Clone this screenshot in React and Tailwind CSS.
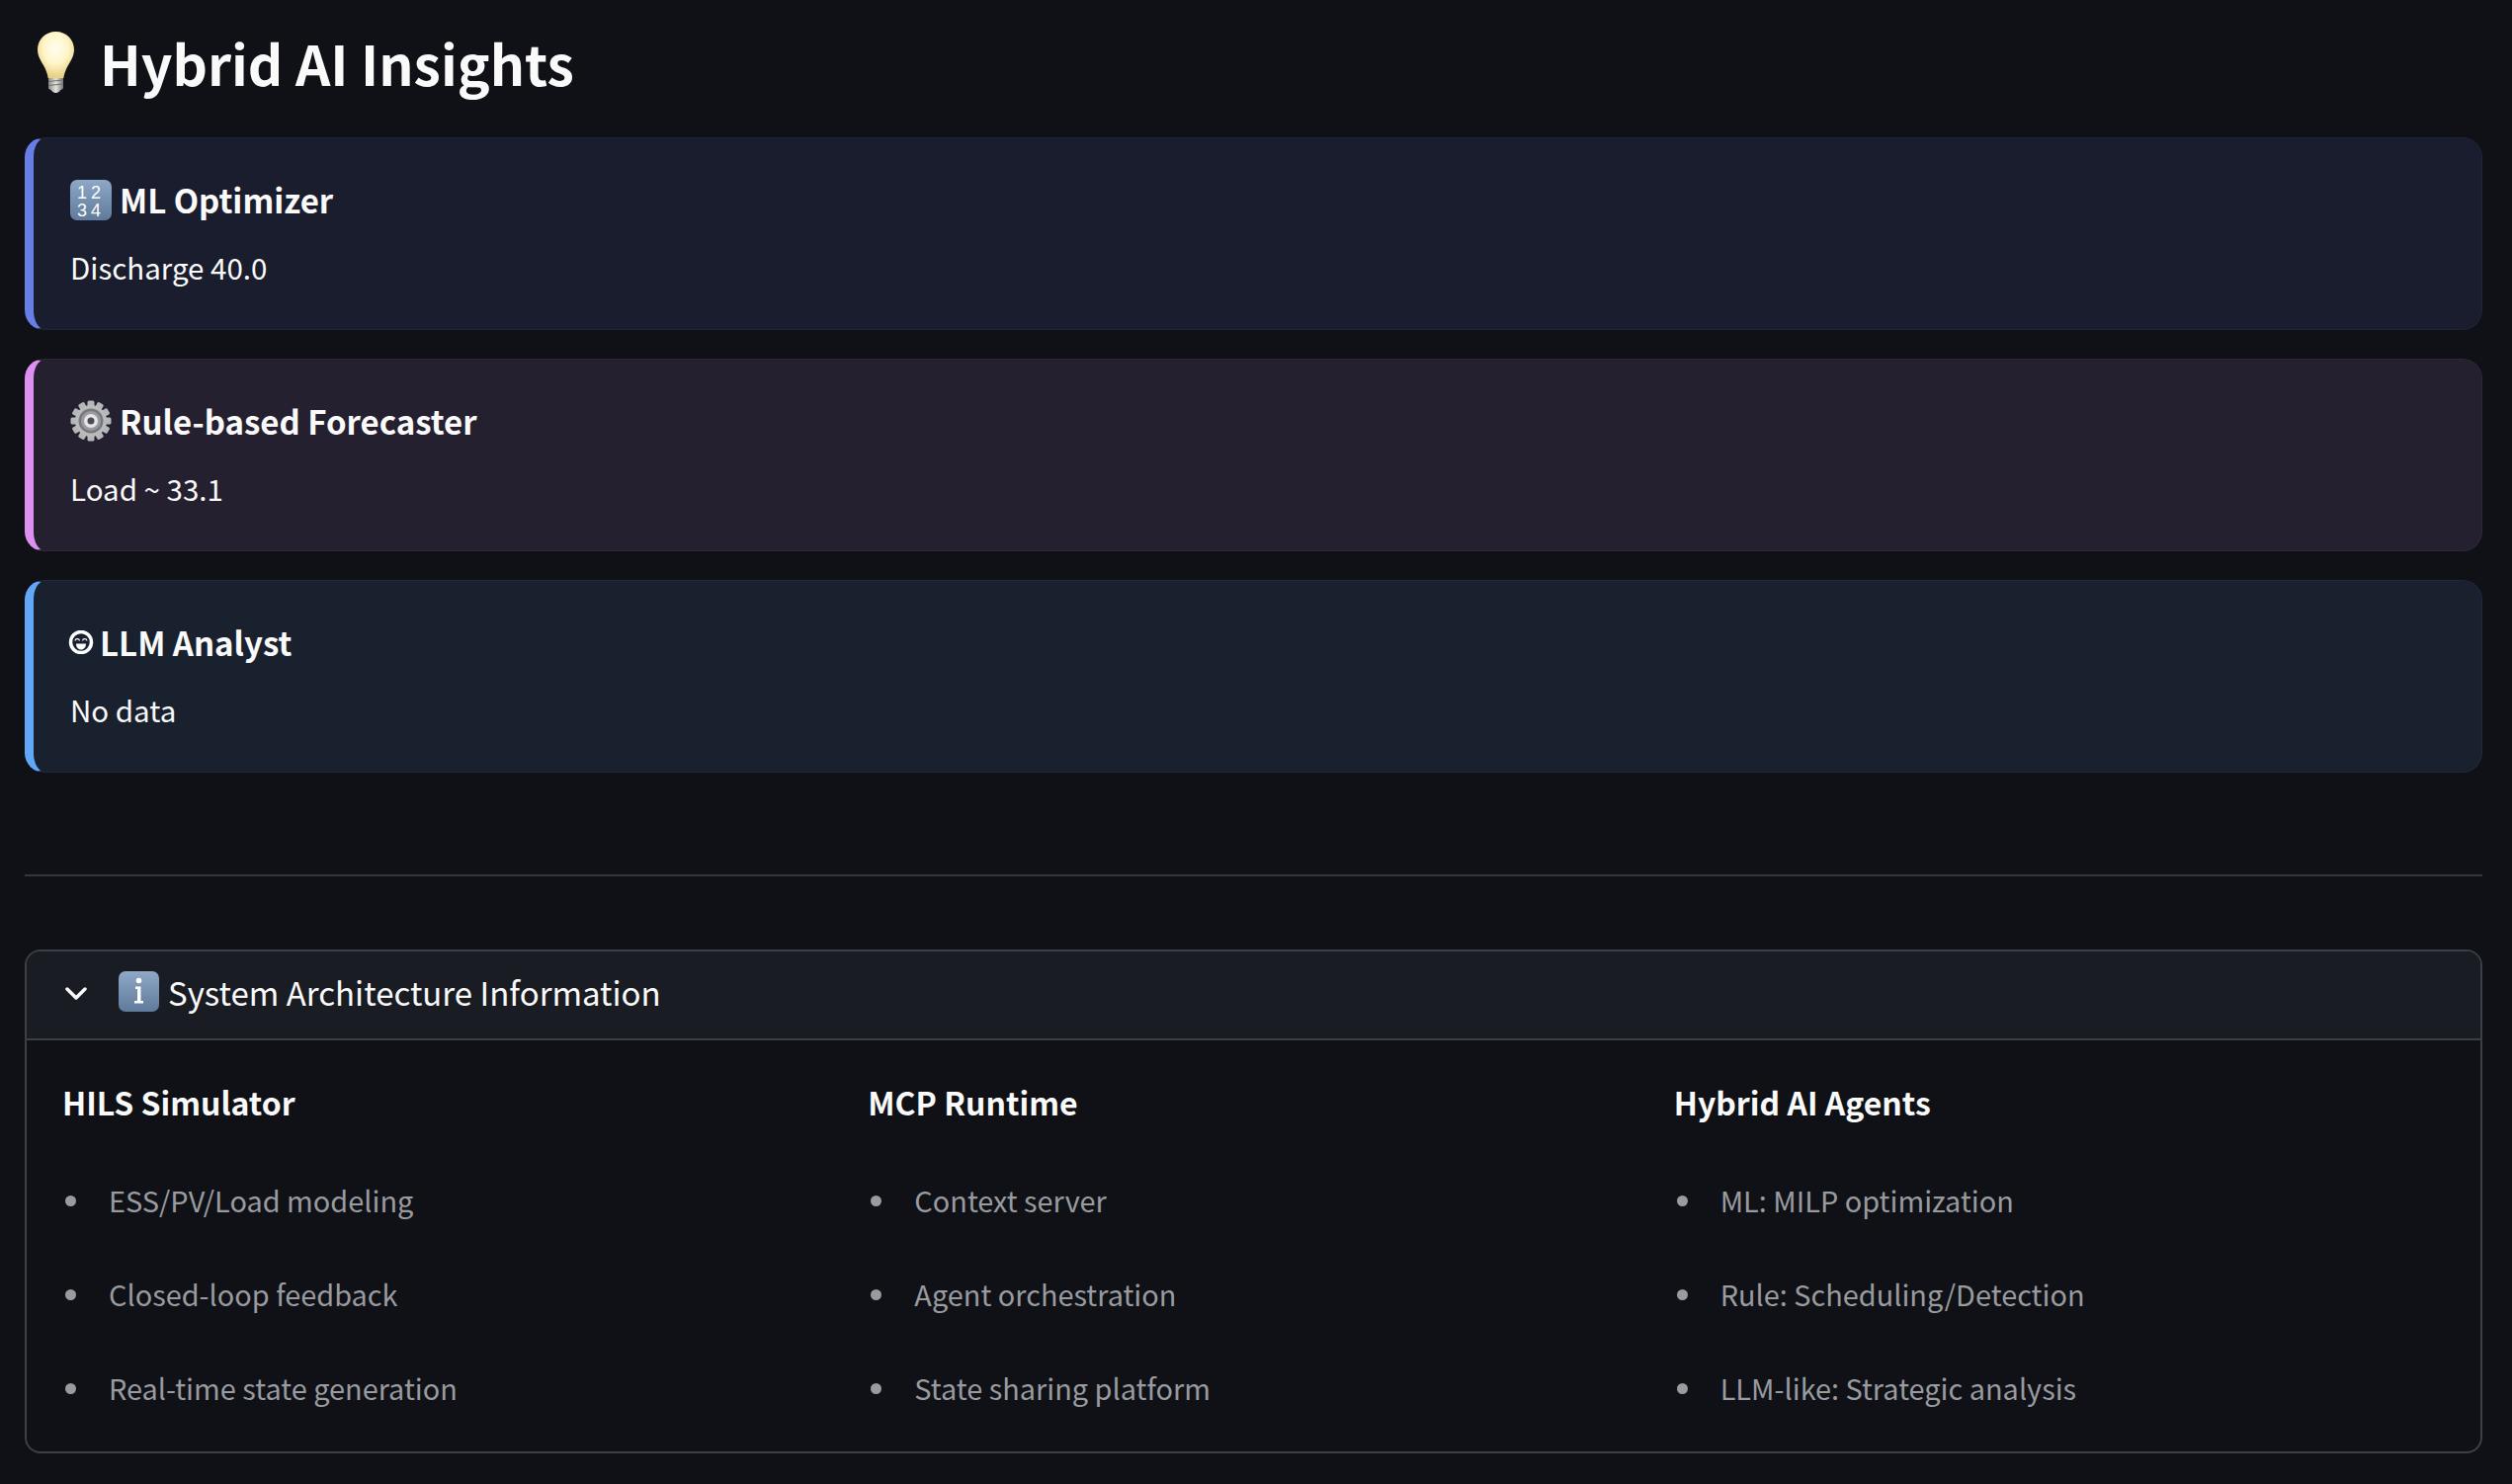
import React from "react";

const fontStack = "font-['Noto_Sans_CJK_KR','Noto_Sans',sans-serif]";

function Bulb() {
  return (
    <svg width="37" height="62" viewBox="0 0 37 62" className="shrink-0">
      <defs>
        <radialGradient id="glass" cx="50%" cy="36%" r="62%">
          <stop offset="0%" stopColor="#fffdf0" />
          <stop offset="55%" stopColor="#fff5c8" />
          <stop offset="100%" stopColor="#e9cf80" />
        </radialGradient>
        <linearGradient id="base" x1="0" y1="0" x2="1" y2="0">
          <stop offset="0%" stopColor="#8a8a88" />
          <stop offset="50%" stopColor="#e2e2dc" />
          <stop offset="100%" stopColor="#77777a" />
        </linearGradient>
      </defs>
      <path d="M18.5 0C8 0 0 8.2 0 18c0 7 3.4 11.5 6.500 17 2 3.500 3.500 7.500 4.200 12h15.600c.7-4.500 2.200-8.500 4.200-12C33.600 29.500 37 25 37 18 37 8.200 29 0 18.500 0z" fill="url(#glass)" />
      <path d="M11 47h15v9.500c0 1.500-1 2-2.500 2.500-1 1.500-2.500 3-5 3s-4-1.500-5-3C12 58.500 11 58 11 56.500z" fill="url(#base)" />
      <path d="M11 50.500l15-1.500M11 54.500l15-1.500" stroke="#6f6f6e" strokeWidth="1" />
    </svg>
  );
}

function KeycapNumbers() {
  return (
    <svg width="42" height="41" viewBox="0 0 42 41" className="shrink-0">
      <defs>
        <linearGradient id="cap1234" x1="0" y1="0" x2="0" y2="1">
          <stop offset="0%" stopColor="#8ea8c6" />
          <stop offset="100%" stopColor="#5f7a9a" />
        </linearGradient>
      </defs>
      <rect width="42" height="41" rx="7" fill="url(#cap1234)" />
      <text x="21" y="18.500" textAnchor="middle" fontSize="18" letterSpacing="4" fill="#fff" fontFamily="Liberation Sans, sans-serif">12</text>
      <text x="21" y="36.500" textAnchor="middle" fontSize="18" letterSpacing="4" fill="#fff" fontFamily="Liberation Sans, sans-serif">34</text>
    </svg>
  );
}

function Gear() {
  const teeth = Array.from({ length: 12 }, (_, i) => i * 30);
  return (
    <svg width="42" height="42" viewBox="0 0 42 42" className="shrink-0">
      {teeth.map((a) => (
        <rect key={a} x="17.500" y="0.500" width="7" height="8" rx="1.500" fill="#b4b6b8" transform={`rotate(${a} 21 21)`} />
      ))}
      <circle cx="21" cy="21" r="16" fill="#b9bbbd" />
      <circle cx="21" cy="21" r="12.500" fill="#77797d" />
      <circle cx="21" cy="21" r="10" fill="#9a9b9f" />
      <circle cx="21" cy="21" r="7" fill="#e6e6e8" />
      <circle cx="21" cy="21" r="3.500" fill="#4e4a58" />
    </svg>
  );
}

function Face() {
  return (
    <svg width="26" height="24" viewBox="0 0 26 24" className="shrink-0">
      <circle cx="13" cy="12" r="10.500" fill="#19212f" stroke="#fff" strokeWidth="3.500" />
      <path d="M7 10.500c.5-2.600 4-2.600 4.500 0M14.500 10.500c.5-2.600 4-2.600 4.500 0" fill="none" stroke="#fff" strokeWidth="1.300" />
      <path d="M8 13.500h10c0 3.500-2 6-5 6s-5-2.500-5-6z" fill="#fff" />
    </svg>
  );
}

function InfoTile() {
  return (
    <svg width="41" height="41" viewBox="0 0 41 41" className="shrink-0">
      <defs>
        <linearGradient id="capInfo" x1="0" y1="0" x2="0" y2="1">
          <stop offset="0%" stopColor="#8ea8c6" />
          <stop offset="100%" stopColor="#5f7a9a" />
        </linearGradient>
      </defs>
      <rect width="41" height="41" rx="7" fill="url(#capInfo)" />
      <circle cx="20.500" cy="9.500" r="2.800" fill="#fff" />
      <path d="M17 15.500h5.500V30H25v2.500h-9V30h3V18h-2z" fill="#fff" />
    </svg>
  );
}

const cards = [
  {
    title: "ML Optimizer",
    body: "Discharge 40.0",
    icon: <KeycapNumbers />,
    box: "bg-[#1a1d2d] border-[#20243a] border-l-[#667ee6]",
    gap: "gap-[8px]",
  },
  {
    title: "Rule-based Forecaster",
    body: "Load ~ 33.1",
    icon: <Gear />,
    box: "bg-[#252030] border-[#2e2839] border-l-[#de90f0]",
    gap: "gap-[8px]",
  },
  {
    title: "LLM Analyst",
    body: "No data",
    icon: <Face />,
    box: "bg-[#19212f] border-[#1f2939] border-l-[#62a8f8]",
    gap: "gap-[6px] -ml-[2px]",
  },
];

const columns = [
  {
    title: "HILS Simulator",
    items: ["ESS/PV/Load modeling", "Closed-loop feedback", "Real-time state generation"],
  },
  {
    title: "MCP Runtime",
    items: ["Context server", "Agent orchestration", "State sharing platform"],
  },
  {
    title: "Hybrid AI Agents",
    items: ["ML: MILP optimization", "Rule: Scheduling/Detection", "LLM-like: Strategic analysis"],
  },
];

export default function App() {
  return (
    <div className={`min-h-[1502px] bg-[#0f1117] px-[25px] text-[#fafafa] ${fontStack}`}>
      {/* Encabezado */}
      <div className="flex h-[139px] items-center gap-[26px] pb-[14px] pl-[13px]">
        <Bulb />
        <h1 className="text-[55.2px] leading-[72px] font-semibold">Hybrid AI Insights</h1>
      </div>

      {/* Tarjetas de agentes */}
      <div className="flex flex-col gap-[29px] pr-[5px]">
        {cards.map((c) => (
          <div key={c.title} className={`h-[195px] rounded-[20px] border border-l-[9px] pt-[42px] pl-[37px] ${c.box}`}>
            <div className={`flex h-[40px] items-center ${c.gap}`}>
              {c.icon}
              <span className="text-[33px] leading-[40px] font-bold">{c.title}</span>
            </div>
            <p className="mt-[26px] text-[29.5px] leading-[44px]">{c.body}</p>
          </div>
        ))}
      </div>

      <hr className="mt-[103px] mr-[5px] border-t-2 border-[#33363d]" />

      {/* Expander de arquitectura */}
      <div className="mt-[74px] mr-[5px] overflow-hidden rounded-[16px] border-2 border-[#3c3f46]">
        <div className="flex h-[90px] items-center border-b-2 border-[#3c3f46] bg-[#1a1c24] pb-[7px] pl-[39px]">
          <svg width="22" height="13" viewBox="0 0 22 13" className="mt-[3px] shrink-0">
            <path d="M2 2l9 9 9-9" fill="none" stroke="#fafafa" strokeWidth="3.500" strokeLinecap="round" strokeLinejoin="round" />
          </svg>
          <span className="ml-[32px]">
            <InfoTile />
          </span>
          <span className="ml-[9px] text-[33px] leading-[44px]">System Architecture Information</span>
        </div>
        <div className="grid grid-cols-3 gap-[32px] pt-[40px] pr-[33px] pb-[43px] pl-[36px]">
          {columns.map((col) => (
            <div key={col.title}>
              <h3 className="text-[32px] leading-[44px] font-semibold">{col.title}</h3>
              <ul className="mt-[55px] flex flex-col gap-[51px]">
                {col.items.map((it) => (
                  <li key={it} className="flex h-[44px] items-center text-[28.9px] leading-[44px] text-[#999b9f]">
                    <span className="mt-[2px] ml-[3px] h-[11px] w-[11px] rounded-full bg-[#999b9f]" />
                    <span className="ml-[33px]">{it}</span>
                  </li>
                ))}
              </ul>
            </div>
          ))}
        </div>
      </div>
    </div>
  );
}
